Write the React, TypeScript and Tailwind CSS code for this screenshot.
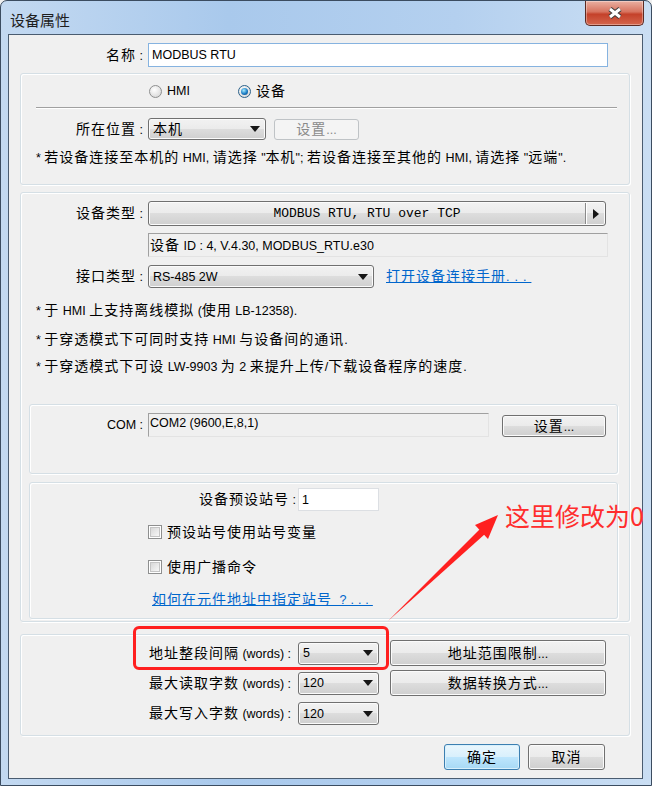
import React from 'react';

const BTN =
  'border-[#707070] bg-[linear-gradient(#f2f2f2_0%,#ebebeb_49%,#dddddd_50%,#cfcfcf_100%)] shadow-[inset_0_0_0_1px_#fbfbfb]';

// CJK runs are set larger than the latin runs, like the dialog's system font
const CJK = /([\u2e80-\u9fff\u3000-\u303f\uff00-\uffef]+)/;
const T = ({ s }: { s: string }) => (
  <>
    {s
      .split(CJK)
      .map((part, i) =>
        !part ? null : i % 2 === 1 ? (
          <span key={i} className="text-[14px] tracking-[1px]">
            {part}
          </span>
        ) : (
          <span key={i}>{part}</span>
        )
      )}
  </>
);

const Button = ({
  label,
  className = '',
  disabled = false,
}: {
  label: string;
  className?: string;
  disabled?: boolean;
}) => (
  <div
    className={`flex items-center justify-center rounded-[3px] border ${
      disabled ? 'border-[#bfc3c6] bg-[#f4f4f4] text-[#8a8a8a]' : `${BTN} text-black`
    } ${className}`}
  >
    <span>
      <T s={label} />
    </span>
  </div>
);

const Combo = ({ value, className = '' }: { value: string; className?: string }) => (
  <div className={`flex items-center justify-between rounded-[3px] border pl-[4px] pr-[5px] ${BTN} ${className}`}>
    <span>
      <T s={value} />
    </span>
    <svg width="10" height="6" viewBox="0 0 10 6">
      <path d="M0 0H10L5 6Z" fill="#151515" />
    </svg>
  </div>
);

const Radio = ({ checked = false }: { checked?: boolean }) => (
  <span
    className={`flex h-[13px] w-[13px] items-center justify-center rounded-full border ${
      checked ? 'border-[#2c628b]' : 'border-[#8e8f8f]'
    } bg-[radial-gradient(circle_at_40%_35%,#ffffff,#d0d0d0)]`}
  >
    {checked && (
      <span className="h-[7px] w-[7px] rounded-full bg-[radial-gradient(circle_at_40%_35%,#a8ecff,#1a7cc4_55%,#0b3d6e)]" />
    )}
  </span>
);

const Check = () => (
  <span className="flex h-[14px] w-[14px] items-center justify-center border border-[#8e8f8f] bg-white">
    <span className="h-[10px] w-[10px] border border-[#c4c4c4] bg-[linear-gradient(135deg,#d8d8d8,#f7f7f7)]" />
  </span>
);

const Group = ({ className = '', children }: { className?: string; children?: React.ReactNode }) => (
  <div className={`flex flex-col rounded-[3px] border border-[#d5dfe5] shadow-[inset_1px_1px_0_#ffffff,1px_1px_0_#ffffff] ${className}`}>
    {children}
  </div>
);

const Sunken = ({ text, className = '' }: { text: string; className?: string }) => (
  <div className={`border border-t-[#a0a0a0] border-l-[#a0a0a0] border-r-[#e3e3e3] border-b-[#e3e3e3] pl-[1px] ${className}`}>
    <span>
      <T s={text} />
    </span>
  </div>
);

const Label = ({ s, className = '' }: { s: string; className?: string }) => (
  <div className={`text-right whitespace-nowrap ${className}`}>
    <T s={s} />
  </div>
);

export default function App() {
  return (
    <div className="relative h-[786px] w-[652px] overflow-hidden bg-[#f0f0f0] font-['Liberation_Sans','Noto_Sans_CJK_SC',sans-serif] text-[12.5px] leading-[18px] text-black">
      <div className="flex h-full flex-col rounded-t-[7px] border border-[#3b4c60] bg-[linear-gradient(90deg,#c3d9f1_0%,#a9c9ec_35%,#b4d0ef_70%,#cadef3_100%)]">
        {/* title bar */}
        <div className="flex h-[33px] shrink-0 items-start justify-between">
          <div className="ml-[9px] mt-[9px] font-['Noto_Sans_CJK_SC',sans-serif] text-[15px] leading-[20px] text-[#1e1e1e]">
            设备属性
          </div>
          <div className="mr-[7px] flex h-[25px] w-[59px] items-center justify-center rounded-b-[5px] border border-t-0 border-[#5c2a22] bg-[linear-gradient(#eab0a2_0%,#d7735f_45%,#c4412a_55%,#d4664d_100%)] shadow-[inset_0_0_0_1px_rgba(255,255,255,0.35)]">
            <svg width="20" height="14" viewBox="0 0 20 14">
              <path d="M5 3L15 11M15 3L5 11" stroke="#3a3a3a" strokeWidth="5" />
              <path d="M5 3L15 11M15 3L5 11" stroke="#ffffff" strokeWidth="3" />
            </svg>
          </div>
        </div>

        {/* client area */}
        <div className="mb-[6px] ml-[7px] mr-[8px] flex flex-1 flex-col border border-[#4a5c70] bg-[#f0f0f0]">
          {/* name */}
          <div className="mt-[8px] flex h-[24px] items-center">
            <Label s="名称 :" className="w-[134px]" />
            <div className="ml-[5px] flex h-[24px] w-[460px] items-center border border-[#86b3e0] bg-white pl-[3px]">
              MODBUS RTU
            </div>
          </div>

          {/* location group */}
          <Group className="ml-[11px] mt-[6px] h-[112px] w-[610px]">
            <div className="ml-[128px] mt-[9px] flex h-[16px] items-center">
              <div className="flex w-[89px] items-center gap-[5px]">
                <Radio />
                <span>HMI</span>
              </div>
              <div className="flex items-center gap-[5px]">
                <Radio checked />
                <span>
                  <T s="设备" />
                </span>
              </div>
            </div>
            <div className="ml-[15px] mt-[8px] h-[1px] w-[581px] bg-[#a0a0a0] shadow-[0_1px_0_#ffffff]" />
            <div className="mt-[10px] flex h-[22px] items-center">
              <Label s="所在位置 :" className="w-[122px]" />
              <Combo value="本机" className="ml-[5px] h-[22px] w-[118px]" />
              <Button label="设置..." disabled className="ml-[8px] h-[21px] w-[85px]" />
            </div>
            <div className="ml-[15px] mt-[8px] h-[18px] whitespace-nowrap">
              <T s={'* 若设备连接至本机的 HMI, 请选择 "本机"; 若设备连接至其他的 HMI, 请选择 "远端".'} />
            </div>
          </Group>

          {/* device group */}
          <Group className="ml-[11px] mt-[7px] h-[430px] w-[610px]">
            <div className="mt-[8px] flex h-[25px] items-center">
              <Label s="设备类型 :" className="w-[122px]" />
              <div className={`ml-[5px] flex h-[25px] w-[458px] items-center rounded-[3px] border ${BTN}`}>
                <span className="flex-1 text-center font-['Liberation_Mono',monospace] text-[13px]">
                  MODBUS RTU, RTU over TCP
                </span>
                <span className="h-[21px] w-[1px] bg-[#8a8a8a] shadow-[1px_0_0_#ffffff]" />
                <span className="flex w-[19px] items-center justify-center">
                  <svg width="6" height="10" viewBox="0 0 6 10">
                    <path d="M0 0L6 5L0 10Z" fill="#151515" />
                  </svg>
                </span>
              </div>
            </div>
            <Sunken text="设备 ID : 4, V.4.30, MODBUS_RTU.e30" className="ml-[127px] mt-[7px] flex h-[24px] w-[460px] items-center" />
            <div className="mt-[8px] flex h-[23px] items-center">
              <Label s="接口类型 :" className="w-[122px]" />
              <Combo value="RS-485 2W" className="ml-[5px] h-[23px] w-[226px]" />
              <span className="ml-[12px] whitespace-nowrap text-[#0066cc] underline">
                <T s="打开设备连接手册" />
                <span className="tracking-[5px]">...</span>
              </span>
            </div>
            <div className="ml-[15px] mt-[13px] h-[20px] whitespace-nowrap">
              <T s="* 于 HMI 上支持离线模拟 (使用 LB-12358)." />
            </div>
            <div className="ml-[15px] mt-[9px] h-[20px] whitespace-nowrap">
              <T s="* 于穿透模式下可同时支持 HMI 与设备间的通讯." />
            </div>
            <div className="ml-[15px] mt-[7px] h-[20px] whitespace-nowrap">
              <T s="* 于穿透模式下可设 LW-9903 为 2 来提升上传/下载设备程序的速度." />
            </div>

            {/* COM */}
            <Group className="ml-[8px] mt-[27px] h-[70px] w-[589px]">
              <div className="mt-[8px] flex h-[24px] items-start">
                <div className="flex h-[24px] w-[113px] items-center justify-end">COM :</div>
                <Sunken text="COM2 (9600,E,8,1)" className="ml-[5px] h-[24px] w-[341px]" />
                <Button label="设置..." className="ml-[13px] mt-[2px] h-[22px] w-[104px]" />
              </div>
            </Group>

            {/* station */}
            <Group className="ml-[8px] mt-[8px] h-[137px] w-[589px]">
              <div className="mt-[5px] flex h-[23px] items-center">
                <Label s="设备预设站号 :" className="w-[266px]" />
                <div className="ml-[2px] flex h-[23px] w-[81px] items-center border border-[#dcdfe3] bg-white pl-[3px]">1</div>
              </div>
              <div className="ml-[118px] mt-[13px] flex h-[16px] items-center gap-[5px]">
                <Check />
                <span>
                  <T s="预设站号使用站号变量" />
                </span>
              </div>
              <div className="ml-[118px] mt-[19px] flex h-[16px] items-center gap-[5px]">
                <Check />
                <span>
                  <T s="使用广播命令" />
                </span>
              </div>
              <div className="ml-[122px] mt-[15px] h-[18px] whitespace-nowrap text-[#0066cc] underline">
                <T s="如何在元件地址中指定站号" />
                <span className="tracking-[4px]"> ?...</span>
              </div>
            </Group>
          </Group>

          {/* address group */}
          <Group className="ml-[11px] mt-[12px] h-[102px] w-[610px]">
            <div className="mt-[5px] flex h-[26px] items-center">
              <Label s="地址整段间隔 (words) :" className="w-[270px]" />
              <Combo value="5" className="ml-[7px] h-[23px] w-[81px]" />
              <Button label="地址范围限制..." className="ml-[11px] h-[26px] w-[216px]" />
            </div>
            <div className="mt-[4px] flex h-[26px] items-center">
              <Label s="最大读取字数 (words) :" className="w-[270px]" />
              <Combo value="120" className="ml-[7px] h-[23px] w-[81px]" />
              <Button label="数据转换方式..." className="ml-[11px] h-[26px] w-[216px]" />
            </div>
            <div className="mt-[6px] flex h-[23px] items-center">
              <Label s="最大写入字数 (words) :" className="w-[270px]" />
              <Combo value="120" className="ml-[7px] h-[23px] w-[81px]" />
            </div>
          </Group>

          {/* ok / cancel */}
          <div className="mt-[8px] flex justify-end gap-[8px] pr-[37px]">
            <div className="flex h-[26px] w-[76px] items-center justify-center rounded-[3px] border border-[#3c7fb1] bg-[linear-gradient(#eaf6fd_0%,#d9f0fc_49%,#bee6fd_50%,#a7d9f5_100%)] shadow-[inset_0_0_0_1px_#d8f0fc]">
              <span>
                <T s="确定" />
              </span>
            </div>
            <Button label="取消" className="h-[26px] w-[77px]" />
          </div>
        </div>
      </div>

      {/* annotation overlay */}
      <div className="absolute left-[133px] top-[626px] h-[44px] w-[256px] rounded-[6px] border-[3px] border-[#ff1f1f]" />
      <svg className="pointer-events-none absolute left-0 top-0" width="652" height="786" viewBox="0 0 652 786">
        <path d="M388 621L485 534L480 529Z" fill="#ff2020" />
        <path d="M498 515L488 539L475 525Z" fill="#ff2020" />
      </svg>
      <div className="absolute left-[505px] top-[500px] whitespace-nowrap font-['Noto_Sans_CJK_SC',sans-serif] text-[25px] leading-[30px] text-[#ff2d2d]">
        这里修改为0
      </div>
    </div>
  );
}
